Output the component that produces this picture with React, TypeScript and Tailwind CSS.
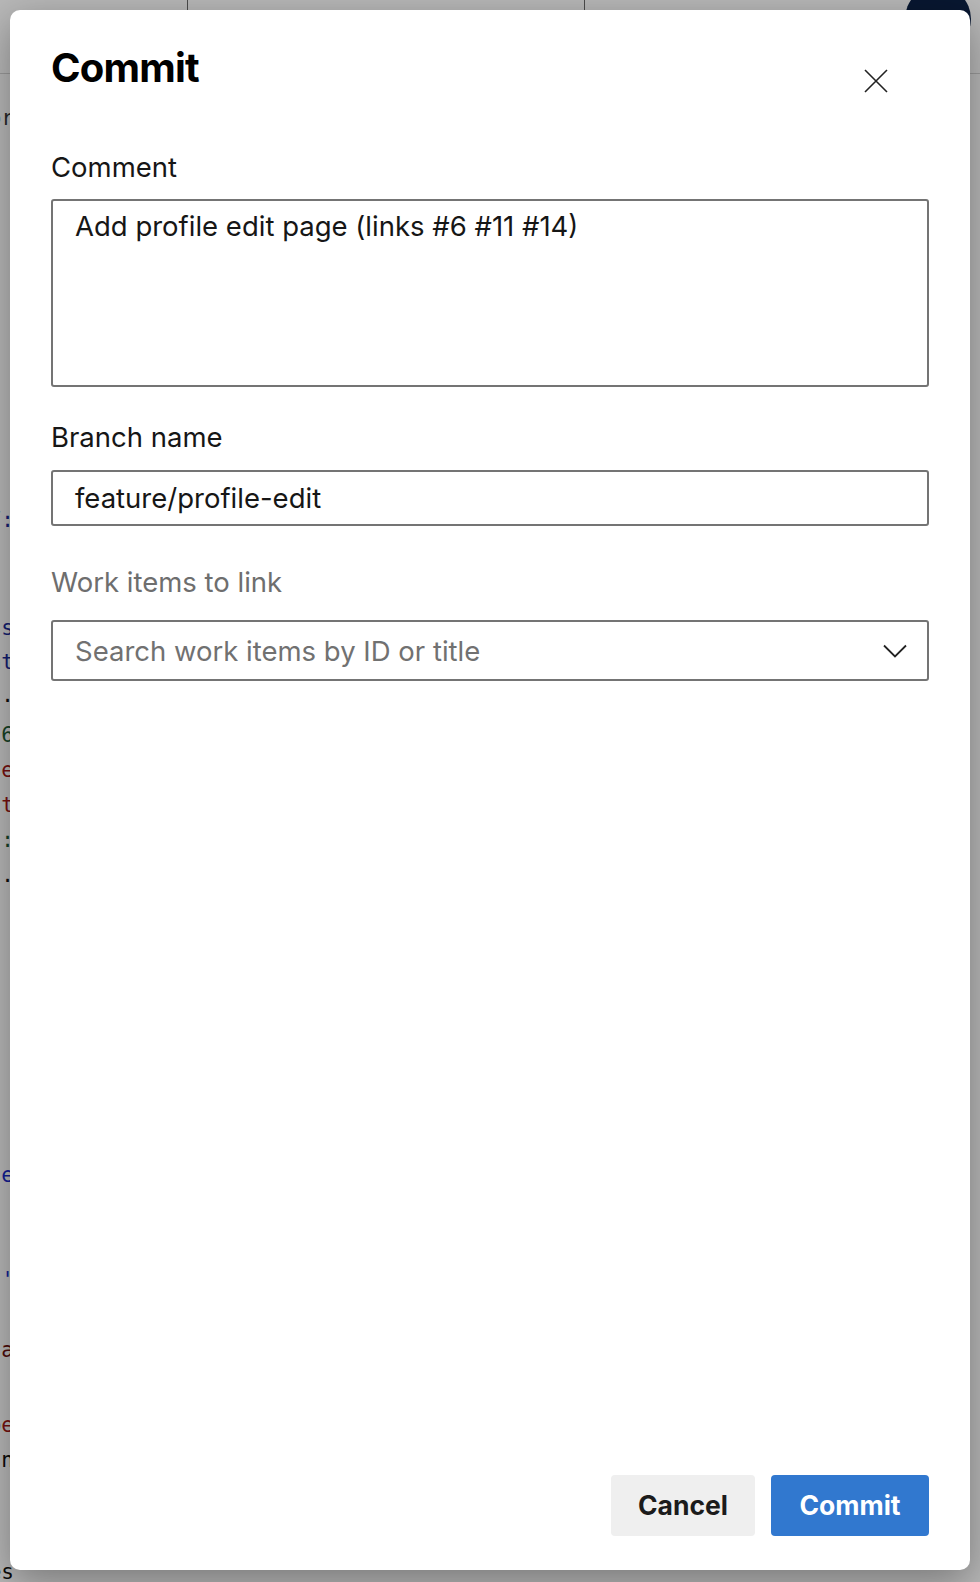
import React from "react";

const codeBits: { top: number; text: string; color: string }[] = [
  { top: 106, text: "or", color: "#3a3a3a" },
  { top: 508, text: "7:", color: "#1a2a9a" },
  { top: 616, text: "-s", color: "#1a2a9a" },
  { top: 650, text: "nt", color: "#1a2a9a" },
  { top: 683, text: ".", color: "#111" },
  { top: 723, text: "6", color: "#1d5a34" },
  { top: 758, text: "le", color: "#a31515" },
  { top: 793, text: ".t", color: "#a31515" },
  { top: 828, text: ":", color: "#1d5a34" },
  { top: 863, text: ".", color: "#111" },
  { top: 1163, text: "te", color: "#1a2acc" },
  { top: 1268, text: "t'", color: "#1a2acc" },
  { top: 1338, text: "la", color: "#6b0f0f" },
  { top: 1413, text: "pe", color: "#a31515" },
  { top: 1448, text: "n", color: "#111" },
  { top: 1560, text: "es", color: "#111" },
];

export default function App() {
  return (
    <div className="relative w-[980px] h-[1582px] overflow-hidden bg-white font-['Inter',sans-serif]">
      {/* background page */}
      <div className="absolute inset-0">
        <div className="flex h-[74px] border-b border-[#d6d6d6]">
          <div className="w-[188px] border-r border-[#6a6a6a]" />
          <div className="w-[397px] border-r border-[#6a6a6a]" />
          <div className="flex-1" />
        </div>
        <div className="absolute left-[905px] top-[-14px] w-[66px] h-[66px] rounded-full bg-[#0c2145]" />
        {codeBits.map((b, i) => (
          <div
            key={i}
            className="absolute left-0 w-[14px] overflow-hidden whitespace-nowrap text-right font-['DejaVu_Sans_Mono',monospace] text-[21px] leading-[24px]"
            style={{ top: b.top, color: b.color }}
          >
            <span className="float-right">{b.text}</span>
          </div>
        ))}
      </div>

      {/* overlay */}
      <div className="absolute inset-0 bg-black/[0.28]" />

      {/* dialog */}
      <div className="absolute left-[10px] top-[10px] w-[960px] h-[1560px] bg-white rounded-[10px] shadow-[0_12px_40px_rgba(0,0,0,0.35)] flex flex-col px-[41px] text-[#161616]">
        <div className="flex items-start justify-between pt-[38px]">
          <h1 className="text-[40px] leading-none font-bold tracking-[-0.02em] text-black">Commit</h1>
          <button className="mt-[21px] mr-[41px] w-[24px] h-[24px] flex items-center justify-center text-[#222]">
            <svg width="24" height="24" viewBox="0 0 24 24" fill="none" stroke="currentColor" strokeWidth="1.6">
              <path d="M1 1 L23 23 M23 1 L1 23" />
            </svg>
          </button>
        </div>

        <label className="mt-[61px] text-[27.5px] leading-[26px]">Comment</label>
        <div className="mt-[19px] h-[188px] border-2 border-[#747474] rounded-[3px] px-[22px] pt-[12px]">
          <div className="text-[27.5px] leading-[26px]">Add profile edit page (links #6 #11 #14)</div>
        </div>

        <label className="mt-[37px] text-[27.5px] leading-[26px]">Branch name</label>
        <div className="mt-[20px] h-[56px] border-2 border-[#747474] rounded-[3px] px-[22px] flex items-center">
          <span className="text-[27.5px] leading-[26px]">feature/profile-edit</span>
        </div>

        <label className="mt-[43px] text-[27.5px] leading-[26px] text-[#6e6e6e]">Work items to link</label>
        <div className="mt-[25px] h-[61px] border-2 border-[#747474] rounded-[3px] pl-[22px] pr-[20px] flex items-center justify-between">
          <span className="text-[27.5px] leading-[26px] text-[#717171]">Search work items by ID or title</span>
          <svg width="24" height="14" viewBox="0 0 24 14" fill="none" stroke="#222" strokeWidth="1.8">
            <path d="M1 1.5 L12 12.5 L23 1.5" />
          </svg>
        </div>

        <div className="flex-1" />

        <div className="flex justify-end gap-[16px] pb-[34px]">
          <button className="w-[144px] h-[61px] rounded-[4px] bg-[#efefef] text-[26.5px] font-bold text-[#1b1b1b]">
            Cancel
          </button>
          <button className="w-[158px] h-[61px] rounded-[4px] bg-[#3178cf] text-[26.5px] font-bold text-white">
            Commit
          </button>
        </div>
      </div>
    </div>
  );
}
